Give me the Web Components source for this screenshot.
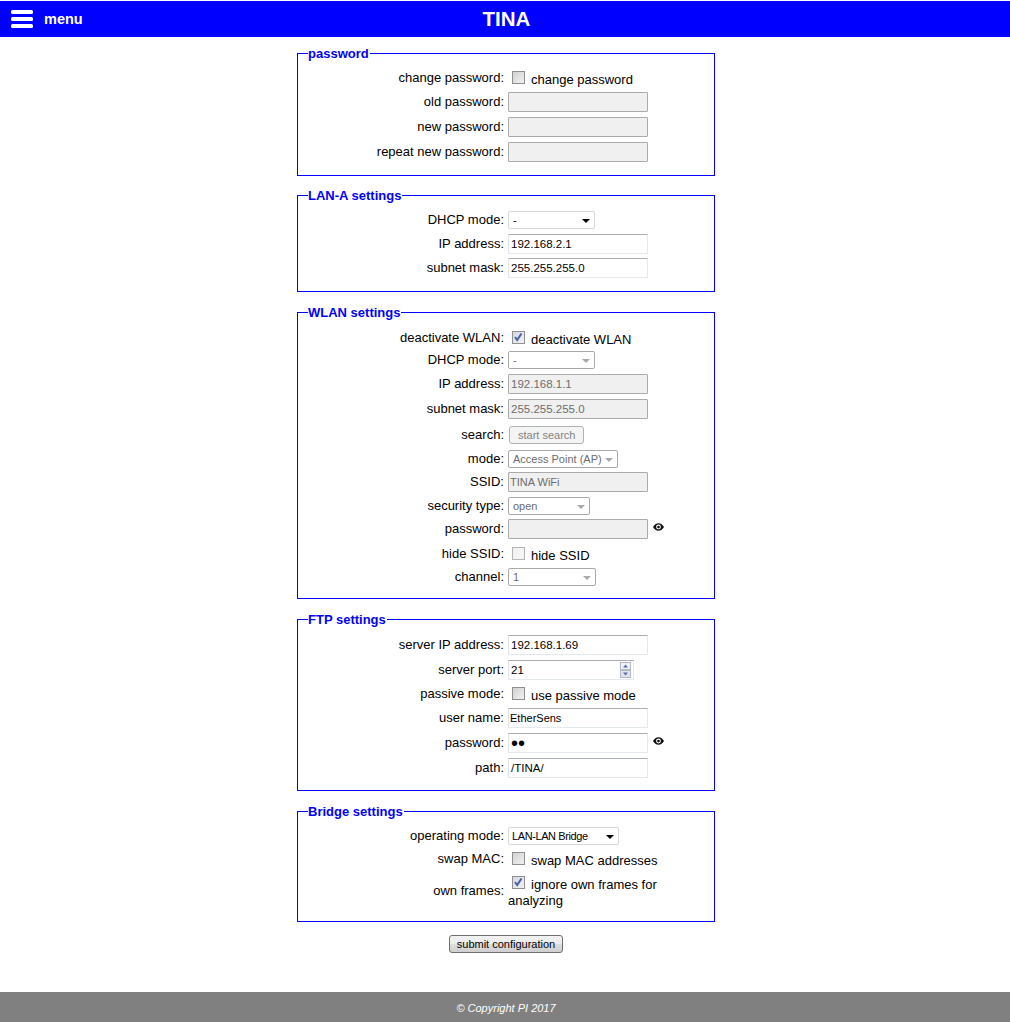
<!DOCTYPE html>
<html>
<head>
<meta charset="utf-8">
<title>TINA</title>
<style>
  html, body { margin: 0; padding: 0; }
  body {
    min-height: 100vh;
    display: flex;
    flex-direction: column;
    font-family: "Liberation Sans", Arial, sans-serif;
    font-size: 13px;
    color: #000;
    background: #fff;
  }
  main { display: flex; flex-direction: column; width: 418px; align-self: center; margin-left: 2px; }
</style>
</head>
<body>
<app-header title-text="TINA">menu</app-header>
<main>
  <settings-group legend="password" top="7" bottom="13">
    <form-row label="change password:" top="7"><check-box>change password</check-box></form-row>
    <form-row label="old password:" top="5"><text-field disabled></text-field></form-row>
    <form-row label="new password:" top="5"><text-field disabled></text-field></form-row>
    <form-row label="repeat new password:" top="5"><text-field disabled></text-field></form-row>
  </settings-group>

  <settings-group legend="LAN-A settings" top="10" bottom="13">
    <form-row label="DHCP mode:" top="7"><select-box width="87">-</select-box></form-row>
    <form-row label="IP address:" top="5"><text-field>192.168.2.1</text-field></form-row>
    <form-row label="subnet mask:" top="4"><text-field>255.255.255.0</text-field></form-row>
  </settings-group>

  <settings-group legend="WLAN settings" top="11" bottom="12">
    <form-row label="deactivate WLAN:" top="8"><check-box checked>deactivate WLAN</check-box></form-row>
    <form-row label="DHCP mode:" top="4"><select-box width="87" disabled>-</select-box></form-row>
    <form-row label="IP address:" top="5"><text-field disabled>192.168.1.1</text-field></form-row>
    <form-row label="subnet mask:" top="5"><text-field disabled>255.255.255.0</text-field></form-row>
    <form-row label="search:" top="7"><push-button disabled>start search</push-button></form-row>
    <form-row label="mode:" top="6"><select-box width="110" disabled>Access Point (AP)</select-box></form-row>
    <form-row label="SSID:" top="4"><text-field disabled compact>TINA WiFi</text-field></form-row>
    <form-row label="security type:" top="5"><select-box width="82" disabled>open</select-box></form-row>
    <form-row label="password:" top="4"><text-field disabled></text-field><eye-icon></eye-icon></form-row>
    <form-row label="hide SSID:" top="6"><check-box faint>hide SSID</check-box></form-row>
    <form-row label="channel:" top="5"><select-box width="88" disabled>1</select-box></form-row>
  </settings-group>

  <settings-group legend="FTP settings" top="11" bottom="12">
    <form-row label="server IP address:" top="7"><text-field>192.168.1.69</text-field></form-row>
    <form-row label="server port:" top="5"><text-field width="126" spinner>21</text-field></form-row>
    <form-row label="passive mode:" top="5"><check-box>use passive mode</check-box></form-row>
    <form-row label="user name:" top="5"><text-field compact>EtherSens</text-field></form-row>
    <form-row label="password:" top="5"><text-field masked>••</text-field><eye-icon></eye-icon></form-row>
    <form-row label="path:" top="5"><text-field>/TINA/</text-field></form-row>
  </settings-group>

  <settings-group legend="Bridge settings" top="11" bottom="13">
    <form-row label="operating mode:" top="7"><select-box width="111" style="letter-spacing:-.4px;padding-left:3px">LAN-LAN Bridge</select-box></form-row>
    <form-row label="swap MAC:" top="5"><check-box>swap MAC addresses</check-box></form-row>
    <form-row label="own frames:" top="6"><check-box checked>ignore own frames for analyzing</check-box></form-row>
  </settings-group>

  <submit-bar>submit configuration</submit-bar>
</main>
<app-footer>© Copyright PI 2017</app-footer>

<script>
class AppHeader extends HTMLElement {
  constructor() {
    super();
    const shadowRoot = this.attachShadow({ mode: 'open' });
    shadowRoot.innerHTML = `
    <style>
      :host {
        display: grid;
        grid-template-columns: 1fr auto 1fr;
        align-items: center;
        height: 36px;
        margin-top: 1px;
        background: #0000ff;
        color: #fff;
        font-weight: bold;
      }
      .menu { display: flex; align-items: center; gap: 11px; padding-left: 11px; font-size: 14.5px; }
      svg { display: block; }
      h1 { margin: 0; padding-left: 3px; font-size: 20.5px; line-height: 24px; font-weight: bold; }
    </style>
    <div class="menu">
      <svg width="22" height="18" viewBox="0 0 22 18" fill="#fff">
        <rect x="0" y="0" width="22" height="4" rx="1.5"/>
        <rect x="0" y="7" width="22" height="4" rx="1.5"/>
        <rect x="0" y="14" width="22" height="4" rx="1.5"/>
      </svg>
      <span><slot></slot></span>
    </div>
    <h1>${this.getAttribute('title-text')}</h1>
    <div></div>`;
  }
}

class SettingsGroup extends HTMLElement {
  constructor() {
    super();
    const shadowRoot = this.attachShadow({ mode: 'open' });
    shadowRoot.innerHTML = `
    <style>
      :host { display: block; margin-top: ${this.getAttribute('top')}px; }
      fieldset {
        margin: 0;
        padding: 0 0 ${this.getAttribute('bottom')}px;
        border: 1px solid #0000ff;
        min-width: 0;
      }
      legend {
        margin-left: 10px;
        padding: 2px 1px 0 0;
        color: #0000ff;
        font-size: 13px;
        font-weight: bold;
        line-height: 16px;
      }
    </style>
    <fieldset>
      <legend>${this.getAttribute('legend')}</legend>
      <slot></slot>
    </fieldset>`;
  }
}

class FormRow extends HTMLElement {
  constructor() {
    super();
    const shadowRoot = this.attachShadow({ mode: 'open' });
    shadowRoot.innerHTML = `
    <style>
      :host {
        display: grid;
        grid-template-columns: 206px 1fr;
        column-gap: 4px;
        align-items: center;
        margin-top: ${this.getAttribute('top') || 0}px;
        padding-right: 14px;
        line-height: 16px;
      }
      label { text-align: right; }
      .value { display: flex; align-items: center; min-width: 0; }
    </style>
    <label>${this.getAttribute('label')}</label>
    <div class="value"><slot></slot></div>`;
  }
}

class TextField extends HTMLElement {
  constructor() {
    super();
    const shadowRoot = this.attachShadow({ mode: 'open' });
    const width = this.getAttribute('width') || 140;
    const spinner = this.hasAttribute('spinner') ? `
      <svg class="spin" width="11" height="16" viewBox="0 0 11 16">
        <rect x="0.5" y="0.5" width="10" height="7" fill="#eef1f7" stroke="#b4b9c4"/>
        <rect x="0.5" y="8.5" width="10" height="7" fill="#dfe3ee" stroke="#b4b9c4"/>
        <path d="M5.5 2.5 L8 5.5 H3 Z" fill="#5a6fa8"/>
        <path d="M5.5 13.5 L8 10.5 H3 Z" fill="#5a6fa8"/>
      </svg>` : '';
    shadowRoot.innerHTML = `
    <style>
      :host {
        display: flex;
        align-items: center;
        flex: none;
        box-sizing: border-box;
        width: ${width}px;
        height: 20px;
        padding: 0 2px 0 2px;
        border: 1px solid #e3e9ef;
        border-top-color: #abadb3;
        border-left-color: #e2e3ea;
        font-size: 11.5px;
        line-height: 16px;
        color: #000;
        white-space: nowrap;
      }
      :host([disabled]) {
        border: 1px solid #ababab;
        background: #f0f0f0;
        color: #6d6d6d;
        border-radius: 1px;
      }
      :host([compact]) { font-size: 11px; padding-left: 1px; }
      :host([masked]) { font-size: 20px; }
      .text { flex: 1; }
      .spin { flex: none; }
    </style>
    <span class="text"><slot></slot></span>${spinner}`;
  }
}

class SelectBox extends HTMLElement {
  constructor() {
    super();
    const shadowRoot = this.attachShadow({ mode: 'open' });
    shadowRoot.innerHTML = `
    <style>
      :host {
        display: flex;
        align-items: center;
        box-sizing: border-box;
        width: ${this.getAttribute('width')}px;
        height: 18px;
        padding: 0 4px 0 4px;
        border: 1px solid #d9d9d9;
        border-radius: 2px;
        background: #fff;
        font-size: 11px;
        line-height: 14px;
        color: #000;
        white-space: nowrap;
      }
      :host([disabled]) { border-color: #a9a9a9; color: #6d6d6d; }
      .text { flex: 1; }
      svg { flex: none; fill: #000; margin-top: 1px; }
      :host([disabled]) svg { fill: #a9a9a9; }
    </style>
    <span class="text"><slot></slot></span>
    <svg width="8" height="4" viewBox="0 0 8 4"><path d="M0 0 H8 L4 4 Z"/></svg>`;
  }
}

class CheckBox extends HTMLElement {
  constructor() {
    super();
    const shadowRoot = this.attachShadow({ mode: 'open' });
    const checked = this.hasAttribute('checked');
    const faint = this.hasAttribute('faint');
    const tick = checked
      ? '<path d="M3 6 L5.2 9 L9.5 2.500" fill="none" stroke="#4a5fa0" stroke-width="2"/>' : '';
    const from = faint ? '#f1f1f1' : checked ? '#d4d8e4' : '#cfcfcf';
    const to = faint ? '#f7f7f7' : '#f3f3f3';
    shadowRoot.innerHTML = `
    <style>
      :host { display: block; padding-top: 3px; margin-bottom: -1px; line-height: 16px; }
      svg { display: inline-block; vertical-align: 0; margin: -3px 6px 0 4px; }
    </style>
    <svg width="13" height="13" viewBox="0 0 13 13">
      <defs><linearGradient id="fill" x1="0" y1="0" x2="1" y2="1">
        <stop offset="0" stop-color="${from}"/><stop offset="1" stop-color="${to}"/>
      </linearGradient></defs>
      <rect x="0.5" y="0.5" width="12" height="12" fill="url(#fill)" stroke="${faint ? '#b5b5b5' : '#8e8f8f'}"/>
      ${tick}
    </svg><slot></slot>`;
  }
}

class PushButton extends HTMLElement {
  constructor() {
    super();
    const shadowRoot = this.attachShadow({ mode: 'open' });
    shadowRoot.innerHTML = `
    <style>
      :host {
        display: inline-flex;
        align-items: center;
        justify-content: center;
        box-sizing: border-box;
        height: 18px;
        margin-left: 1px;
        padding: 0 8px;
        border: 1px solid #adb2b5;
        border-radius: 3px;
        background: #f4f4f4;
        font-size: 11px;
        color: #838383;
        white-space: nowrap;
      }
    </style>
    <slot></slot>`;
  }
}

class EyeIcon extends HTMLElement {
  constructor() {
    super();
    const shadowRoot = this.attachShadow({ mode: 'open' });
    shadowRoot.innerHTML = `
    <style>
      :host { display: block; margin: -4px 0 0 5px; }
      svg { display: block; }
    </style>
    <svg width="11" height="8" viewBox="0 0 24 16">
      <path fill="#111" d="M12 0C7 0 2.700 3.100 0 8c2.700 4.900 7 8 12 8s9.300-3.100 12-8c-2.700-4.900-7-8-12-8zm0 13.300A5.300 5.300 0 1 1 12 2.700a5.300 5.300 0 0 1 0 10.600zM12 5a3 3 0 1 0 0 6 3 3 0 0 0 0-6z"/>
    </svg>`;
  }
}

class SubmitBar extends HTMLElement {
  constructor() {
    super();
    const shadowRoot = this.attachShadow({ mode: 'open' });
    shadowRoot.innerHTML = `
    <style>
      :host { display: flex; justify-content: center; margin-top: 13px; }
      button {
        box-sizing: border-box;
        width: 114px;
        height: 18px;
        padding: 0;
        border: 1px solid #707070;
        border-radius: 3px;
        background: linear-gradient(#f2f2f2, #ebebeb 48%, #dddddd 52%, #cfcfcf);
        font-family: inherit;
        font-size: 11px;
        color: #000;
      }
    </style>
    <button type="button"><slot></slot></button>`;
  }
}

class AppFooter extends HTMLElement {
  constructor() {
    super();
    const shadowRoot = this.attachShadow({ mode: 'open' });
    shadowRoot.innerHTML = `
    <style>
      :host {
        display: flex;
        align-items: center;
        justify-content: center;
        box-sizing: border-box;
        height: 30px;
        margin-top: auto;
        padding: 2px 0 0 2px;
        background: #808080;
        color: #fff;
        font-size: 11px;
        font-style: italic;
      }
    </style>
    <slot></slot>`;
  }
}

customElements.define('app-header', AppHeader);
customElements.define('settings-group', SettingsGroup);
customElements.define('form-row', FormRow);
customElements.define('text-field', TextField);
customElements.define('select-box', SelectBox);
customElements.define('check-box', CheckBox);
customElements.define('push-button', PushButton);
customElements.define('eye-icon', EyeIcon);
customElements.define('submit-bar', SubmitBar);
customElements.define('app-footer', AppFooter);
</script>
</body>
</html>
